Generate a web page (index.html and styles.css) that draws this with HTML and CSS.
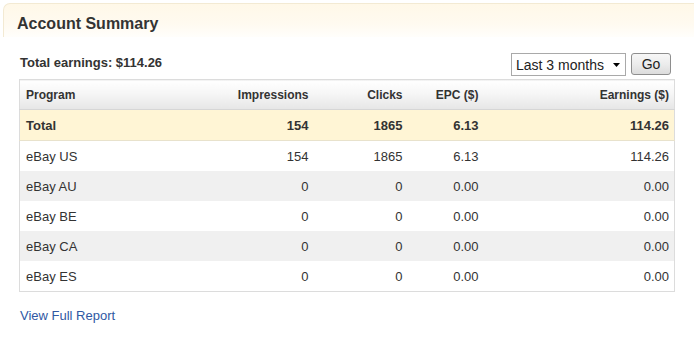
FILE: index.html
```html
<!DOCTYPE html>
<html>
<head>
<meta charset="utf-8">
<link rel="stylesheet" href="styles.css">
</head>
<body>
<div class="panel">
  <div class="panel-head"><h2 class="title">Account Summary</h2></div>
  <div class="panel-body">
    <div class="toolbar">
      <span class="total-earn">Total earnings: $114.26</span>
      <div class="controls">
        <div class="select"><span>Last 3 months</span><svg class="arrow" width="7" height="4" viewBox="0 0 7 4"><polygon points="0,0 7,0 3.5,4" fill="#000"/></svg></div>
        <button class="go">Go</button>
      </div>
    </div>
    <table class="summary">
      <colgroup>
        <col class="c-prog"><col class="c-imp"><col class="c-clk"><col class="c-epc"><col class="c-earn">
      </colgroup>
      <thead>
        <tr><th class="l">Program</th><th>Impressions</th><th>Clicks</th><th>EPC ($)</th><th>Earnings ($)</th></tr>
      </thead>
      <tbody>
        <tr class="tot"><td class="l">Total</td><td>154</td><td>1865</td><td>6.13</td><td>114.26</td></tr>
        <tr><td class="l">eBay US</td><td>154</td><td>1865</td><td>6.13</td><td>114.26</td></tr>
        <tr class="alt"><td class="l">eBay AU</td><td>0</td><td>0</td><td>0.00</td><td>0.00</td></tr>
        <tr><td class="l">eBay BE</td><td>0</td><td>0</td><td>0.00</td><td>0.00</td></tr>
        <tr class="alt"><td class="l">eBay CA</td><td>0</td><td>0</td><td>0.00</td><td>0.00</td></tr>
        <tr><td class="l">eBay ES</td><td>0</td><td>0</td><td>0.00</td><td>0.00</td></tr>
      </tbody>
    </table>
    <a class="report" href="#">View Full Report</a>
  </div>
</div>
</body>
</html>
```
FILE: styles.css
```css
html, body {
  margin: 0;
  padding: 0;
  background: #fff;
}
body {
  font-family: "Liberation Sans", Arial, sans-serif;
  color: #333;
}
.panel {
  padding-top: 3px;
  padding-left: 3px;
}
.panel-head {
  height: 34px;
  border-top: 1px solid #f3ead3;
  border-left: 1px solid #f3ead3;
  border-top-left-radius: 7px;
  background: linear-gradient(to bottom, #fff8e8 0%, #fffaf0 60%, #fffefb 100%);
  padding-left: 13px;
  box-sizing: border-box;
  padding-top: 10px;
}
.title {
  margin: 0;
  font-size: 16px;
  line-height: 20px;
  font-weight: bold;
  color: #333;
}
.panel-body {
  padding-left: 16px;
  padding-top: 16px;
}
.toolbar {
  width: 655px;
  display: flex;
  justify-content: space-between;
  align-items: flex-start;
  height: 23px;
  margin-bottom: 3px;
}
.total-earn {
  font-size: 13px;
  font-weight: bold;
  line-height: 15px;
  padding-top: 2px;
  padding-left: 1px;
}
.controls {
  display: flex;
  gap: 5px;
  margin-right: 3px;
}
.select {
  width: 115px;
  height: 23px;
  box-sizing: border-box;
  border: 1px solid #a9a9a9;
  background: #fff;
  display: flex;
  align-items: center;
  padding-left: 4px;
  font-size: 14px;
  color: #222;
}
.select span {
  flex: 1;
}
.arrow {
  margin-right: 5px;
  margin-top: 1px;
}
.go {
  width: 40px;
  height: 22px;
  box-sizing: border-box;
  border: 1px solid #8e8e8e;
  border-radius: 3px;
  background: linear-gradient(to bottom, #f7f7f7 0%, #ececec 50%, #dcdcdc 100%);
  font-family: "Liberation Sans", Arial, sans-serif;
  font-size: 14px;
  color: #222;
  padding: 0;
}
.summary {
  width: 655px;
  table-layout: fixed;
  border-collapse: collapse;
  border: 1px solid #dcdcdc;
}
.c-prog { width: 194px; }
.c-imp { width: 100px; }
.c-clk { width: 94px; }
.c-epc { width: 76px; }
.c-earn { width: 191px; }
.summary th {
  height: 30px;
  padding: 0 5px;
  font-size: 12px;
  font-weight: bold;
  color: #333;
  text-align: right;
  background: linear-gradient(to bottom, #ffffff 0%, #f6f6f6 45%, #e6e6e6 100%);
  border-bottom: 1px solid #d6d6d6;
  box-sizing: border-box;
}
.summary td {
  height: 30px;
  padding: 0 5px;
  font-size: 13px;
  color: #333;
  text-align: right;
}
.summary .l {
  text-align: left;
  padding-left: 6px;
}
.summary .tot td {
  background: #fff5d5;
  font-weight: bold;
  font-size: 13px;
  border-bottom: 1px solid #e8e2cc;
}
.summary .alt td {
  background: #f0f0f0;
}
.report {
  display: inline-block;
  margin-top: 16px;
  margin-left: 1px;
  font-size: 13px;
  line-height: 16px;
  color: #2f58a3;
  text-decoration: none;
}
```
